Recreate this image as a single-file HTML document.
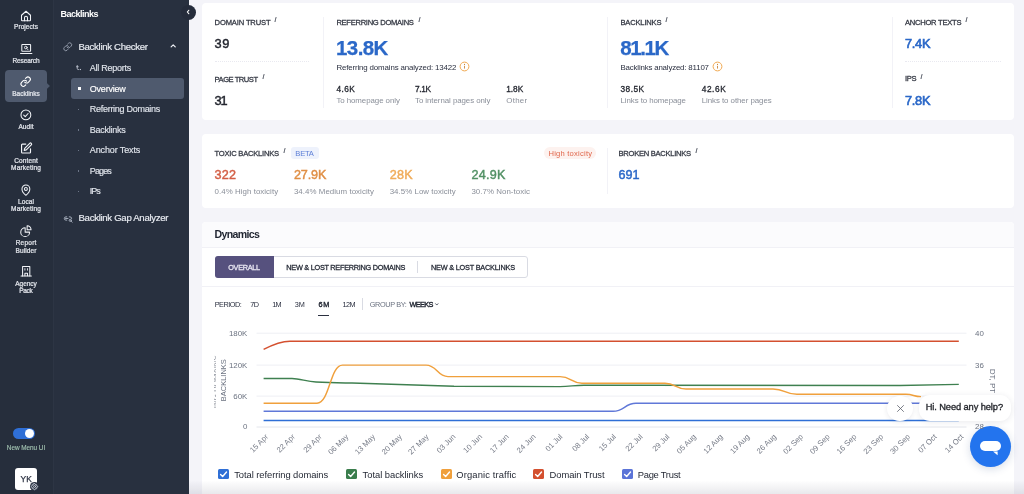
<!DOCTYPE html>
<html lang="en"><head><meta charset="utf-8"><title>Backlinks Overview</title>
<style>
html,body{margin:0;padding:0;}
body{width:1024px;height:494px;overflow:hidden;position:relative;background:#f4f4f9;font-family:"Liberation Sans",sans-serif;}
.t{position:absolute;white-space:pre;line-height:1;}
#txt{position:absolute;left:0;top:0;width:1024px;height:494px;will-change:transform;}
.abs{position:absolute;}
.card{position:absolute;background:#fff;border-radius:4px;}
svg{position:absolute;overflow:visible;}

</style></head>
<body>
<div class="abs" style="left:0;top:0;width:53px;height:494px;background:#262e3c;"></div>
<div class="abs" style="left:53px;top:0;width:135.5px;height:494px;background:#28303f;"></div>
<div class="abs" style="left:52.5px;top:0;width:1px;height:494px;background:#2d3544;"></div>
<!-- active rail -->
<div class="abs" style="left:5px;top:69.9px;width:42.3px;height:32.3px;background:#4f5a6e;border-radius:4px;"></div>
<div class="abs" style="left:45.3px;top:83.6px;width:4.2px;height:4.2px;background:#4f5a6e;transform:rotate(45deg);"></div>
<!-- active sub -->
<div class="abs" style="left:70.7px;top:78px;width:113px;height:20.7px;background:#4f5a6e;border-radius:3px;"></div>
<div class="abs" style="left:78px;top:87.3px;width:2.6px;height:2.6px;background:#fff;"></div>
<!-- collapse btn -->
<div class="abs" style="left:181.1px;top:4.7px;width:15px;height:15px;border-radius:50%;background:#252c3b;"></div>

<!-- cards -->
<div class="card" style="left:201.5px;top:3px;width:812.3px;height:117.3px;"></div>
<div class="card" style="left:201.5px;top:134px;width:812.3px;height:74.300px;"></div>
<div class="card" style="left:201.5px;top:221.600px;width:812.3px;height:280px;"></div>
<!-- rail icons: 24-unit viewBox drawn at 12px -->
<svg style="left:20px;top:9.6px" width="12" height="12" viewBox="0 0 24 24" fill="none" stroke="#f2f4f8" stroke-width="2.1" stroke-linejoin="round" stroke-linecap="round"><path d="M3 10.5 12 2.5l9 8V20a1.5 1.5 0 0 1-1.5 1.5h-15A1.5 1.5 0 0 1 3 20z"/><path d="M9 21.5v-6a3 3 0 0 1 6 0v6"/></svg>
<svg style="left:19.8px;top:42.6px" width="12.4" height="12.4" viewBox="0 0 24 24" fill="none" stroke="#f2f4f8" stroke-width="2" stroke-linejoin="round" stroke-linecap="round"><rect x="3.5" y="3" width="17" height="13" rx="1"/><path d="M1 20.5h22"/><circle cx="11.3" cy="8.8" r="2.6" stroke-width="1.7"/><path d="M13.3 10.8 15.5 13" stroke-width="1.7"/></svg>
<svg style="left:20.4px;top:76.2px" width="11.3" height="11.3" viewBox="0 0 24 24" fill="none" stroke="#ffffff" stroke-width="2.3" stroke-linejoin="round" stroke-linecap="round"><path d="M10 13a5 5 0 0 0 7.54.54l3-3a5 5 0 0 0-7.07-7.07l-1.72 1.71"/><path d="M14 11a5 5 0 0 0-7.54-.54l-3 3a5 5 0 0 0 7.07 7.07l1.71-1.71"/></svg>
<svg style="left:20px;top:109.3px" width="11.8" height="11.8" viewBox="0 0 24 24" fill="none" stroke="#f2f4f8" stroke-width="2.1" stroke-linejoin="round" stroke-linecap="round"><circle cx="12" cy="12" r="10"/><path d="M7.5 12.3l3.2 3.2 5.8-6.3"/></svg>
<svg style="left:19.8px;top:142.4px" width="12.6" height="12.6" viewBox="0 0 24 24" fill="none" stroke="#f2f4f8" stroke-width="2.2" stroke-linejoin="round" stroke-linecap="round"><path d="M11 4H4.5A1.5 1.5 0 0 0 3 5.500v14A1.500 1.500 0 0 0 4.500 21h14a1.500 1.500 0 0 0 1.500-1.500V13"/><path d="M18.500 2.500a2.120 2.120 0 0 1 3 3L12 15l-4 1 1-4z"/></svg>
<svg style="left:20.2px;top:183.8px" width="11.8" height="11.8" viewBox="0 0 24 24" fill="none" stroke="#f2f4f8" stroke-width="2.1" stroke-linejoin="round" stroke-linecap="round"><path d="M20 10c0 6.500-8 13-8 13s-8-6.500-8-13a8 8 0 0 1 16 0z"/><circle cx="12" cy="10" r="3"/></svg>
<svg style="left:20px;top:224.600px" width="11.800" height="11.800" viewBox="0 0 24 24" fill="none" stroke="#f2f4f8" stroke-width="2.100" stroke-linejoin="round" stroke-linecap="round"><path d="M10.500 5.500A9 9 0 1 0 19.500 14.500H10.500z"/><path d="M14.500 1.500v8h8a8 8 0 0 0-8-8z"/></svg>
<svg style="left:19.800px;top:265.300px" width="12.400" height="12.400" viewBox="0 0 24 24" fill="none" stroke="#f2f4f8" stroke-width="2" stroke-linejoin="round" stroke-linecap="round"><path d="M5 21.500V3h14v18.500"/><path d="M2 21.500h20"/><path d="M9.500 21v-5h5v5"/><path d="M9.500 7v3M14.500 7v3" stroke-width="1.700"/></svg>

<!-- toggle -->
<div class="abs" style="left:13px;top:427.700px;width:22.400px;height:11.800px;border-radius:6px;background:#2f6fd6;"></div>
<div class="abs" style="left:24.600px;top:428.700px;width:9.800px;height:9.800px;border-radius:50%;background:#ffffff;"></div>
<!-- avatar -->
<div class="abs" style="left:15.200px;top:467.500px;width:22px;height:22px;border-radius:3px;background:#ffffff;"></div>
<div class="abs" style="left:29.600px;top:482.400px;width:9px;height:9px;border-radius:50%;background:#283040;"></div>
<svg style="left:30.600px;top:483.400px" width="7" height="7" viewBox="0 0 24 24" fill="none" stroke="#cfd5df" stroke-width="3" stroke-linejoin="round" stroke-linecap="round"><circle cx="12" cy="12" r="3.500"/><path d="M12 2l2.500 1 .8 2.600 2.700-.6 1.900 1.900-.6 2.700 2.600.8L23 12l-1 2.500-2.600.8.600 2.700-1.900 1.900-2.700-.6-.8 2.600L12 23l-2.500-1-.8-2.600-2.700.6-1.900-1.900.6-2.700-2.600-.8L1 12l1-2.500 2.600-.8-.6-2.700 1.900-1.900 2.700.6.8-2.600z"/></svg>

<!-- panel icons -->
<svg style="left:63px;top:42px" width="9.500" height="9.500" viewBox="0 0 24 24" fill="none" stroke="#9ba3b2" stroke-width="2.300" stroke-linejoin="round" stroke-linecap="round"><path d="M10 13a5 5 0 0 0 7.540.54l3-3a5 5 0 0 0-7.070-7.070l-1.720 1.710"/><path d="M14 11a5 5 0 0 0-7.540-.54l-3 3a5 5 0 0 0 7.070 7.070l1.710-1.710"/></svg>
<svg style="left:170.400px;top:43px" width="6.400" height="5.500" viewBox="0 0 14 12" fill="none" stroke="#eef0f5" stroke-width="2.700" stroke-linejoin="round" stroke-linecap="round"><path d="M2.500 8.500 7 4l4.500 4.500"/></svg>
<svg style="left:76px;top:65px" width="5" height="5.500" viewBox="0 0 10 11" fill="none" stroke="#c3c9d4" stroke-width="1.700" stroke-linejoin="round" stroke-linecap="round"><path d="M2.500 1v6a2 2 0 0 0 2 2h1M1 3.500h3.500"/><circle cx="8.500" cy="9" r=".5" fill="#c3c9d4"/></svg>
<svg style="left:62.500px;top:214px" width="10" height="9" viewBox="0 0 24 22" fill="none" stroke="#aab2c0" stroke-width="2.300" stroke-linejoin="round" stroke-linecap="round"><path d="M9 7H7a4 4 0 0 0 0 8h2M15 7h2a4 4 0 0 1 4 4M6 11h6"/><circle cx="17.500" cy="15.500" r="2.600"/><path d="M19.500 17.500 22 20"/></svg>
<svg style="left:186.200px;top:9.100px" width="4.300" height="6" viewBox="0 0 10 14" fill="none" stroke="#ffffff" stroke-width="2.600" stroke-linejoin="round" stroke-linecap="round"><path d="M6.500 3 3 7l3.500 4"/></svg>
<div class="abs" style="left:78px;top:108.8px;width:1.400px;height:1.400px;background:#6d7688;"></div>
<div class="abs" style="left:78px;top:129.3px;width:1.400px;height:1.400px;background:#6d7688;"></div>
<div class="abs" style="left:78px;top:149.8px;width:1.400px;height:1.400px;background:#6d7688;"></div>
<div class="abs" style="left:78px;top:170.3px;width:1.400px;height:1.400px;background:#6d7688;"></div>
<div class="abs" style="left:78px;top:190.8px;width:1.400px;height:1.400px;background:#6d7688;"></div>
<svg style="left:0;top:0;will-change:transform" width="1024" height="494" viewBox="0 0 1024 494" fill="none">
<path d="M256.5 333.2H966.5" stroke="#eeeff4" stroke-width="1"/>
<path d="M256.5 365.1H966.5" stroke="#eeeff4" stroke-width="1"/>
<path d="M256.5 396.1H966.5" stroke="#eeeff4" stroke-width="1"/>
<path d="M256.5 427H966.5" stroke="#e4e6ec" stroke-width="1"/>
<path d="M263.6 349.4 C272 345 280 341.2 290 341.2 L958.8 341.2" stroke="#d4502f" stroke-width="1.45"/>
<path d="M263.6 378.5 L292 378.5 C300 378.5 306 381.4 316 382 C330 382.8 340 382.8 352 383 L454 386.2 L560 386.6 C570 386.6 574 385.2 584 385.2 L900 385.4 L958.8 384.4" stroke="#3f8050" stroke-width="1.45"/>
<path d="M263.6 403.2 L317.0 403.2 C329.8 403.2 329.8 365.1 342.5 365.1 L426.0 365.1 C437.0 365.1 437.0 376.6 448.0 376.6 L560.0 376.6 C571.0 376.6 571.0 383.2 582.0 383.2 L665.0 383.2 C675.5 383.2 675.5 389.0 686.0 389.0 L773.0 389.0 C785.0 389.0 785.0 394.3 797.0 394.3 L906.0 394.3 C913.5 394.3 913.5 396.6 921.0 396.6" stroke="#f0a03c" stroke-width="1.45"/>
<path d="M263.6 411.3 L613.0 411.3 C624.5 411.3 624.5 403.3 636.0 403.3 L958.8 403.3" stroke="#6078d8" stroke-width="1.45"/>
<path d="M263.6 420.4 L958.8 420.4" stroke="#2f6fd6" stroke-width="1.45"/>
<text x="268.8" y="437.2" transform="rotate(-45 268.8 437.2)" text-anchor="end" font-size="7.7" fill="#757a86" font-family="Liberation Sans, sans-serif">15 Apr</text>
<text x="295.5" y="437.2" transform="rotate(-45 295.5 437.2)" text-anchor="end" font-size="7.7" fill="#757a86" font-family="Liberation Sans, sans-serif">22 Apr</text>
<text x="322.3" y="437.2" transform="rotate(-45 322.3 437.2)" text-anchor="end" font-size="7.7" fill="#757a86" font-family="Liberation Sans, sans-serif">29 Apr</text>
<text x="349.0" y="437.2" transform="rotate(-45 349.0 437.2)" text-anchor="end" font-size="7.7" fill="#757a86" font-family="Liberation Sans, sans-serif">06 May</text>
<text x="375.8" y="437.2" transform="rotate(-45 375.8 437.2)" text-anchor="end" font-size="7.7" fill="#757a86" font-family="Liberation Sans, sans-serif">13 May</text>
<text x="402.5" y="437.2" transform="rotate(-45 402.5 437.2)" text-anchor="end" font-size="7.7" fill="#757a86" font-family="Liberation Sans, sans-serif">20 May</text>
<text x="429.2" y="437.2" transform="rotate(-45 429.2 437.2)" text-anchor="end" font-size="7.7" fill="#757a86" font-family="Liberation Sans, sans-serif">27 May</text>
<text x="456.0" y="437.2" transform="rotate(-45 456.0 437.2)" text-anchor="end" font-size="7.7" fill="#757a86" font-family="Liberation Sans, sans-serif">03 Jun</text>
<text x="482.7" y="437.2" transform="rotate(-45 482.7 437.2)" text-anchor="end" font-size="7.7" fill="#757a86" font-family="Liberation Sans, sans-serif">10 Jun</text>
<text x="509.4" y="437.2" transform="rotate(-45 509.4 437.2)" text-anchor="end" font-size="7.7" fill="#757a86" font-family="Liberation Sans, sans-serif">17 Jun</text>
<text x="536.2" y="437.2" transform="rotate(-45 536.2 437.2)" text-anchor="end" font-size="7.7" fill="#757a86" font-family="Liberation Sans, sans-serif">24 Jun</text>
<text x="562.9" y="437.2" transform="rotate(-45 562.9 437.2)" text-anchor="end" font-size="7.7" fill="#757a86" font-family="Liberation Sans, sans-serif">01 Jul</text>
<text x="589.7" y="437.2" transform="rotate(-45 589.7 437.2)" text-anchor="end" font-size="7.7" fill="#757a86" font-family="Liberation Sans, sans-serif">08 Jul</text>
<text x="616.4" y="437.2" transform="rotate(-45 616.4 437.2)" text-anchor="end" font-size="7.7" fill="#757a86" font-family="Liberation Sans, sans-serif">15 Jul</text>
<text x="643.1" y="437.2" transform="rotate(-45 643.1 437.2)" text-anchor="end" font-size="7.7" fill="#757a86" font-family="Liberation Sans, sans-serif">22 Jul</text>
<text x="669.9" y="437.2" transform="rotate(-45 669.9 437.2)" text-anchor="end" font-size="7.7" fill="#757a86" font-family="Liberation Sans, sans-serif">29 Jul</text>
<text x="696.6" y="437.2" transform="rotate(-45 696.6 437.2)" text-anchor="end" font-size="7.7" fill="#757a86" font-family="Liberation Sans, sans-serif">05 Aug</text>
<text x="723.4" y="437.2" transform="rotate(-45 723.4 437.2)" text-anchor="end" font-size="7.7" fill="#757a86" font-family="Liberation Sans, sans-serif">12 Aug</text>
<text x="750.1" y="437.2" transform="rotate(-45 750.1 437.2)" text-anchor="end" font-size="7.7" fill="#757a86" font-family="Liberation Sans, sans-serif">19 Aug</text>
<text x="776.8" y="437.2" transform="rotate(-45 776.8 437.2)" text-anchor="end" font-size="7.7" fill="#757a86" font-family="Liberation Sans, sans-serif">26 Aug</text>
<text x="803.6" y="437.2" transform="rotate(-45 803.6 437.2)" text-anchor="end" font-size="7.7" fill="#757a86" font-family="Liberation Sans, sans-serif">02 Sep</text>
<text x="830.3" y="437.2" transform="rotate(-45 830.3 437.2)" text-anchor="end" font-size="7.7" fill="#757a86" font-family="Liberation Sans, sans-serif">09 Sep</text>
<text x="857.0" y="437.2" transform="rotate(-45 857.0 437.2)" text-anchor="end" font-size="7.7" fill="#757a86" font-family="Liberation Sans, sans-serif">16 Sep</text>
<text x="883.8" y="437.2" transform="rotate(-45 883.8 437.2)" text-anchor="end" font-size="7.7" fill="#757a86" font-family="Liberation Sans, sans-serif">23 Sep</text>
<text x="910.5" y="437.2" transform="rotate(-45 910.5 437.2)" text-anchor="end" font-size="7.7" fill="#757a86" font-family="Liberation Sans, sans-serif">30 Sep</text>
<text x="937.3" y="437.2" transform="rotate(-45 937.3 437.2)" text-anchor="end" font-size="7.7" fill="#757a86" font-family="Liberation Sans, sans-serif">07 Oct</text>
<text x="964.0" y="437.2" transform="rotate(-45 964.0 437.2)" text-anchor="end" font-size="7.7" fill="#757a86" font-family="Liberation Sans, sans-serif">14 Oct</text>
<text x="0" y="0" transform="translate(226 380.2) rotate(-90)" text-anchor="middle" font-size="7.9" fill="#6b7280" font-family="Liberation Sans, sans-serif" textLength="42" lengthAdjust="spacingAndGlyphs">BACKLINKS</text>
<text x="0" y="0" transform="translate(989.6 381) rotate(90)" text-anchor="middle" font-size="7.9" fill="#6b7280" font-family="Liberation Sans, sans-serif" textLength="24.500" lengthAdjust="spacingAndGlyphs">DT, PT</text>
</svg>
<div class="abs" style="left:213.600px;top:352px;width:2.800px;height:56px;overflow:hidden;"><svg style="left:0;top:0" width="10" height="90" viewBox="0 0 10 90"><text transform="translate(3.600 1) rotate(-90)" text-anchor="end" font-size="7.900" fill="#8a8f99" font-family="Liberation Sans, sans-serif">REFERRING DOMAINS,</text></svg></div><div class="abs" style="left:214.600px;top:61px;width:94.700px;height:0;border-top:1px dotted #e9e9f0;"></div>
<div class="abs" style="left:905px;top:61px;width:95.800px;height:0;border-top:1px dotted #e9e9f0;"></div>
<div class="abs" style="left:323px;top:16.500px;width:1px;height:91.500px;background:#f2f2f7;"></div>
<div class="abs" style="left:607.3px;top:16.500px;width:1px;height:91.500px;background:#f2f2f7;"></div>
<div class="abs" style="left:891.7px;top:16.500px;width:1px;height:91.500px;background:#f2f2f7;"></div>
<div class="abs" style="left:607.300px;top:148px;width:1px;height:46px;background:#f2f2f7;"></div>
<svg style="left:459.4px;top:61.3px" width="11" height="11" viewBox="0 0 11 11" fill="none"><circle cx="5.500" cy="5.500" r="4.400" stroke="#f0a850" stroke-width="1"/><path d="M5.500 4.800v2.800" stroke="#c9853a" stroke-width=".9"/><circle cx="5.500" cy="3.400" r=".55" fill="#c9853a"/></svg>
<svg style="left:712.3px;top:61.3px" width="11" height="11" viewBox="0 0 11 11" fill="none"><circle cx="5.500" cy="5.500" r="4.400" stroke="#f0a850" stroke-width="1"/><path d="M5.500 4.800v2.800" stroke="#c9853a" stroke-width=".9"/><circle cx="5.500" cy="3.400" r=".55" fill="#c9853a"/></svg>
<div class="abs" style="left:290.800px;top:147.400px;width:28.200px;height:12px;border-radius:3px;background:#eef2fc;"></div>
<div class="abs" style="left:544.300px;top:147.400px;width:51.800px;height:12px;border-radius:6px;background:#fdf2ef;"></div>
<div class="abs" style="left:201.500px;top:221.600px;width:812.300px;height:25.700px;background:#fbfbfd;border-radius:4px 4px 0 0;"></div>
<div class="abs" style="left:201.500px;top:247px;width:812.300px;height:1px;background:#f1f1f6;"></div>
<div class="abs" style="left:201.500px;top:286px;width:812.300px;height:1px;background:#f1f1f6;"></div>
<div class="abs" style="left:214.500px;top:256px;width:313.500px;height:21.500px;border:1px solid #d9dbe3;border-radius:3px;box-sizing:border-box;background:#fff;"></div>
<div class="abs" style="left:214.500px;top:256px;width:59px;height:21.500px;border-radius:3px 0 0 3px;background:#56517e;"></div>
<div class="abs" style="left:417.300px;top:260.500px;width:1px;height:12.500px;background:#d9dbe3;"></div>
<div class="abs" style="left:318.300px;top:315.400px;width:11.200px;height:1.100px;background:#2b3040;"></div>
<div class="abs" style="left:362.400px;top:298.400px;width:1px;height:12px;background:#d9dbe3;"></div>
<svg style="left:435.400px;top:303.200px" width="3.600" height="3" viewBox="0 0 6 5" fill="none" stroke="#2b3040" stroke-width="1.300" stroke-linecap="round" stroke-linejoin="round"><path d="M1 1.200 3 3.400 5 1.200"/></svg>
<div class="abs" style="left:217.8px;top:468.700px;width:10.900px;height:10.500px;border-radius:1.500px;background:#2f6fd6;"></div>
<svg style="left:217.8px;top:468.700px" width="10.900" height="10.500" viewBox="0 0 11 10.500" fill="none" stroke="#ffffff" stroke-width="1.400" stroke-linecap="round" stroke-linejoin="round"><path d="M2.600 5.400 4.700 7.500 8.600 3"/></svg>
<div class="abs" style="left:346.3px;top:468.700px;width:10.900px;height:10.500px;border-radius:1.500px;background:#3a7d4c;"></div>
<svg style="left:346.3px;top:468.700px" width="10.900" height="10.500" viewBox="0 0 11 10.500" fill="none" stroke="#ffffff" stroke-width="1.400" stroke-linecap="round" stroke-linejoin="round"><path d="M2.600 5.400 4.700 7.500 8.600 3"/></svg>
<div class="abs" style="left:441.2px;top:468.700px;width:10.900px;height:10.500px;border-radius:1.500px;background:#f0a03c;"></div>
<svg style="left:441.2px;top:468.700px" width="10.900" height="10.500" viewBox="0 0 11 10.500" fill="none" stroke="#ffffff" stroke-width="1.400" stroke-linecap="round" stroke-linejoin="round"><path d="M2.600 5.400 4.700 7.500 8.600 3"/></svg>
<div class="abs" style="left:533.2px;top:468.700px;width:10.900px;height:10.500px;border-radius:1.500px;background:#d4502f;"></div>
<svg style="left:533.2px;top:468.700px" width="10.900" height="10.500" viewBox="0 0 11 10.500" fill="none" stroke="#ffffff" stroke-width="1.400" stroke-linecap="round" stroke-linejoin="round"><path d="M2.600 5.400 4.700 7.500 8.600 3"/></svg>
<div class="abs" style="left:621.8px;top:468.700px;width:10.900px;height:10.500px;border-radius:1.500px;background:#5b74d8;"></div>
<svg style="left:621.8px;top:468.700px" width="10.900" height="10.500" viewBox="0 0 11 10.500" fill="none" stroke="#ffffff" stroke-width="1.400" stroke-linecap="round" stroke-linejoin="round"><path d="M2.600 5.400 4.700 7.500 8.600 3"/></svg>
<div class="abs" style="left:188.500px;top:480px;width:835.500px;height:14px;background:linear-gradient(to bottom,rgba(120,120,140,0),rgba(120,120,140,.16));"></div>
<div class="abs" style="left:918.500px;top:394.500px;width:92px;height:26.500px;border-radius:11px;background:#fff;box-shadow:0 1px 6px rgba(40,40,70,.10);"></div>
<div class="abs" style="left:887.400px;top:395.900px;width:25.400px;height:25.400px;border-radius:50%;background:#fff;box-shadow:0 1px 5px rgba(40,40,70,.10);"></div>
<svg style="left:896.800px;top:405.300px" width="7" height="7" viewBox="0 0 7 7" fill="none" stroke="#5a5f6b" stroke-width=".8" stroke-linecap="round"><path d="M.500 .500 6.500 6.500M6.500 .500 .500 6.500"/></svg>
<div class="abs" style="left:969.800px;top:426.300px;width:41.200px;height:41.200px;border-radius:50%;background:#2374ee;box-shadow:0 2px 8px rgba(30,60,120,.18);"></div>
<svg style="left:979.800px;top:441px" width="21" height="15" viewBox="0 0 21 15"><rect x="0" y="0" width="21" height="10" rx="5" fill="#fff"/><path d="M13 10.600h4.600v3.600z" fill="#fff"/></svg>
<div id="txt">
<div class="t" style="left:14.05px;top:24.12px;font-size:6.5px;color:#e3e6ec;letter-spacing:0.059px;-webkit-text-stroke:0.23px #e3e6ec;">Projects</div>
<div class="t" style="left:12.45px;top:58.02px;font-size:6.5px;color:#e3e6ec;letter-spacing:-0.104px;-webkit-text-stroke:0.23px #e3e6ec;">Research</div>
<div class="t" style="left:12.20px;top:91.22px;font-size:6.5px;color:#e3e6ec;letter-spacing:0.016px;-webkit-text-stroke:0.23px #e3e6ec;">Backlinks</div>
<div class="t" style="left:18.40px;top:124.22px;font-size:6.5px;color:#e3e6ec;letter-spacing:0.093px;-webkit-text-stroke:0.23px #e3e6ec;">Audit</div>
<div class="t" style="left:14.15px;top:158.12px;font-size:6.5px;color:#e3e6ec;letter-spacing:0.153px;-webkit-text-stroke:0.23px #e3e6ec;">Content</div>
<div class="t" style="left:11.10px;top:165.32px;font-size:6.5px;color:#e3e6ec;letter-spacing:0.157px;-webkit-text-stroke:0.23px #e3e6ec;">Marketing</div>
<div class="t" style="left:18.10px;top:199.12px;font-size:6.5px;color:#e3e6ec;letter-spacing:0.063px;-webkit-text-stroke:0.23px #e3e6ec;">Local</div>
<div class="t" style="left:11.10px;top:206.12px;font-size:6.5px;color:#e3e6ec;letter-spacing:0.157px;-webkit-text-stroke:0.23px #e3e6ec;">Marketing</div>
<div class="t" style="left:15.65px;top:240.32px;font-size:6.5px;color:#e3e6ec;letter-spacing:0.237px;-webkit-text-stroke:0.23px #e3e6ec;">Report</div>
<div class="t" style="left:15.50px;top:247.52px;font-size:6.5px;color:#e3e6ec;letter-spacing:0.128px;-webkit-text-stroke:0.23px #e3e6ec;">Builder</div>
<div class="t" style="left:15.25px;top:281.02px;font-size:6.5px;color:#e3e6ec;letter-spacing:-0.037px;-webkit-text-stroke:0.23px #e3e6ec;">Agency</div>
<div class="t" style="left:19.20px;top:288.32px;font-size:6.5px;color:#e3e6ec;letter-spacing:-0.284px;-webkit-text-stroke:0.23px #e3e6ec;">Pack</div>
<div class="t" style="left:6.80px;top:445.17px;font-size:6.4px;color:#a3c4b2;letter-spacing:-0.032px;-webkit-text-stroke:0.12px #a3c4b2;">New Menu UI</div>
<div class="t" style="left:20.61px;top:474.90px;font-size:8.4px;color:#2a3040;-webkit-text-stroke:0.25px #2a3040;">YK</div>
<div class="t" style="left:60.50px;top:9.70px;font-size:9px;color:#ffffff;font-weight:bold;letter-spacing:-0.504px;">Backlinks</div>
<div class="t" style="left:78.50px;top:41.51px;font-size:9.6px;color:#e9ecf2;letter-spacing:-0.308px;-webkit-text-stroke:0.17px #e9ecf2;">Backlink Checker</div>
<div class="t" style="left:89.80px;top:63.70px;font-size:9.0px;color:#dfe3ea;letter-spacing:-0.252px;-webkit-text-stroke:0.16px #dfe3ea;">All Reports</div>
<div class="t" style="left:89.80px;top:84.70px;font-size:9.0px;color:#ffffff;letter-spacing:-0.217px;-webkit-text-stroke:0.16px #ffffff;">Overview</div>
<div class="t" style="left:89.80px;top:105.20px;font-size:9.0px;color:#dfe3ea;letter-spacing:-0.283px;-webkit-text-stroke:0.16px #dfe3ea;">Referring Domains</div>
<div class="t" style="left:89.80px;top:125.70px;font-size:9.0px;color:#dfe3ea;letter-spacing:-0.252px;-webkit-text-stroke:0.16px #dfe3ea;">Backlinks</div>
<div class="t" style="left:89.80px;top:146.20px;font-size:9.0px;color:#dfe3ea;letter-spacing:-0.125px;-webkit-text-stroke:0.16px #dfe3ea;">Anchor Texts</div>
<div class="t" style="left:89.80px;top:166.70px;font-size:9.0px;color:#dfe3ea;letter-spacing:-0.883px;-webkit-text-stroke:0.16px #dfe3ea;">Pages</div>
<div class="t" style="left:89.80px;top:187.20px;font-size:9.0px;color:#dfe3ea;letter-spacing:-1.008px;-webkit-text-stroke:0.16px #dfe3ea;">IPs</div>
<div class="t" style="left:78.50px;top:213.31px;font-size:9.6px;color:#e9ecf2;letter-spacing:-0.299px;-webkit-text-stroke:0.17px #e9ecf2;">Backlink Gap Analyzer</div>
<div class="t" style="left:214.60px;top:18.99px;font-size:7.6px;color:#333742;letter-spacing:-0.152px;-webkit-text-stroke:0.27px #333742;">DOMAIN TRUST</div>
<div class="t" style="left:274.50px;top:16.19px;font-size:8.0px;color:#555a66;font-style:italic;-webkit-text-stroke:0.22px #555a66;">i</div>
<div class="t" style="left:214.60px;top:37.75px;font-size:12.8px;color:#23262f;letter-spacing:0.566px;-webkit-text-stroke:0.45px #23262f;">39</div>
<div class="t" style="left:214.60px;top:75.99px;font-size:7.6px;color:#333742;letter-spacing:-0.481px;-webkit-text-stroke:0.27px #333742;">PAGE TRUST</div>
<div class="t" style="left:262.50px;top:73.19px;font-size:8.0px;color:#555a66;font-style:italic;-webkit-text-stroke:0.22px #555a66;">i</div>
<div class="t" style="left:214.60px;top:94.85px;font-size:12.8px;color:#23262f;letter-spacing:-1.234px;-webkit-text-stroke:0.45px #23262f;">31</div>
<div class="t" style="left:336.40px;top:18.99px;font-size:7.6px;color:#333742;letter-spacing:-0.299px;-webkit-text-stroke:0.27px #333742;">REFERRING DOMAINS</div>
<div class="t" style="left:418.50px;top:16.19px;font-size:8.0px;color:#555a66;font-style:italic;-webkit-text-stroke:0.22px #555a66;">i</div>
<div class="t" style="left:336.00px;top:37.59px;font-size:20.5px;color:#2b68c8;font-weight:bold;letter-spacing:-0.580px;-webkit-text-stroke:0.25px #2b68c8;">13.8K</div>
<div class="t" style="left:336.40px;top:64.14px;font-size:7.9px;color:#2b3040;letter-spacing:-0.143px;">Referring domains analyzed: 13422</div>
<div class="t" style="left:336.40px;top:85.25px;font-size:8.3px;color:#23262f;letter-spacing:0.474px;-webkit-text-stroke:0.29px #23262f;">4.6K</div>
<div class="t" style="left:336.40px;top:96.94px;font-size:7.9px;color:#8a8f99;letter-spacing:-0.066px;">To homepage only</div>
<div class="t" style="left:415.00px;top:85.25px;font-size:8.3px;color:#23262f;letter-spacing:-0.359px;-webkit-text-stroke:0.29px #23262f;">7.1K</div>
<div class="t" style="left:415.00px;top:96.94px;font-size:7.9px;color:#8a8f99;letter-spacing:-0.060px;">To internal pages only</div>
<div class="t" style="left:506.20px;top:85.25px;font-size:8.3px;color:#23262f;letter-spacing:-0.026px;-webkit-text-stroke:0.29px #23262f;">1.8K</div>
<div class="t" style="left:506.20px;top:96.94px;font-size:7.9px;color:#8a8f99;letter-spacing:0.316px;">Other</div>
<div class="t" style="left:620.50px;top:18.99px;font-size:7.6px;color:#333742;letter-spacing:-0.205px;-webkit-text-stroke:0.27px #333742;">BACKLINKS</div>
<div class="t" style="left:665.50px;top:16.19px;font-size:8.0px;color:#555a66;font-style:italic;-webkit-text-stroke:0.22px #555a66;">i</div>
<div class="t" style="left:620.20px;top:37.59px;font-size:20.5px;color:#2b68c8;font-weight:bold;letter-spacing:-1.380px;-webkit-text-stroke:0.25px #2b68c8;">81.1K</div>
<div class="t" style="left:620.50px;top:64.14px;font-size:7.9px;color:#2b3040;letter-spacing:-0.182px;">Backlinks analyzed: 81107</div>
<div class="t" style="left:620.50px;top:85.25px;font-size:8.3px;color:#23262f;letter-spacing:0.453px;-webkit-text-stroke:0.29px #23262f;">38.5K</div>
<div class="t" style="left:620.50px;top:96.94px;font-size:7.9px;color:#8a8f99;letter-spacing:-0.074px;">Links to homepage</div>
<div class="t" style="left:701.70px;top:85.25px;font-size:8.3px;color:#23262f;letter-spacing:0.578px;-webkit-text-stroke:0.29px #23262f;">42.6K</div>
<div class="t" style="left:701.70px;top:96.94px;font-size:7.9px;color:#8a8f99;letter-spacing:-0.056px;">Links to other pages</div>
<div class="t" style="left:905.00px;top:18.99px;font-size:7.6px;color:#333742;letter-spacing:-0.260px;-webkit-text-stroke:0.27px #333742;">ANCHOR TEXTS</div>
<div class="t" style="left:965.50px;top:16.19px;font-size:8.0px;color:#555a66;font-style:italic;-webkit-text-stroke:0.22px #555a66;">i</div>
<div class="t" style="left:905.00px;top:37.75px;font-size:12.8px;color:#2b68c8;letter-spacing:-0.276px;-webkit-text-stroke:0.64px #2b68c8;">7.4K</div>
<div class="t" style="left:905.00px;top:75.49px;font-size:7.6px;color:#333742;letter-spacing:-0.375px;-webkit-text-stroke:0.27px #333742;">IPS</div>
<div class="t" style="left:920.50px;top:73.19px;font-size:8.0px;color:#555a66;font-style:italic;-webkit-text-stroke:0.22px #555a66;">i</div>
<div class="t" style="left:905.00px;top:94.85px;font-size:12.8px;color:#2b68c8;letter-spacing:-0.276px;-webkit-text-stroke:0.64px #2b68c8;">7.8K</div>
<div class="t" style="left:214.60px;top:149.69px;font-size:7.6px;color:#333742;letter-spacing:-0.237px;-webkit-text-stroke:0.27px #333742;">TOXIC BACKLINKS</div>
<div class="t" style="left:283.50px;top:146.89px;font-size:8.0px;color:#555a66;font-style:italic;-webkit-text-stroke:0.22px #555a66;">i</div>
<div class="t" style="left:295.30px;top:149.69px;font-size:7.6px;color:#5d7fd6;letter-spacing:-0.227px;">BETA</div>
<div class="t" style="left:548.50px;top:149.69px;font-size:7.6px;color:#e0674c;letter-spacing:0.214px;">High toxicity</div>
<div class="t" style="left:214.60px;top:168.54px;font-size:12.6px;color:#d35e45;letter-spacing:0.192px;-webkit-text-stroke:0.44px #d35e45;">322</div>
<div class="t" style="left:214.60px;top:187.74px;font-size:7.9px;color:#8a8f99;letter-spacing:0.046px;">0.4% High toxicity</div>
<div class="t" style="left:293.90px;top:168.54px;font-size:12.6px;color:#e08f45;letter-spacing:-0.105px;-webkit-text-stroke:0.44px #e08f45;">27.9K</div>
<div class="t" style="left:293.90px;top:187.74px;font-size:7.9px;color:#8a8f99;letter-spacing:0.053px;">34.4% Medium toxicity</div>
<div class="t" style="left:389.70px;top:168.54px;font-size:12.6px;color:#f0ac5a;letter-spacing:0.289px;-webkit-text-stroke:0.44px #f0ac5a;">28K</div>
<div class="t" style="left:389.70px;top:187.74px;font-size:7.9px;color:#8a8f99;letter-spacing:0.038px;">34.5% Low toxicity</div>
<div class="t" style="left:471.40px;top:168.54px;font-size:12.6px;color:#529165;letter-spacing:0.270px;-webkit-text-stroke:0.44px #529165;">24.9K</div>
<div class="t" style="left:471.40px;top:187.74px;font-size:7.9px;color:#8a8f99;letter-spacing:0.042px;">30.7% Non-toxic</div>
<div class="t" style="left:618.60px;top:149.69px;font-size:7.6px;color:#333742;letter-spacing:-0.287px;-webkit-text-stroke:0.27px #333742;">BROKEN BACKLINKS</div>
<div class="t" style="left:695.50px;top:146.89px;font-size:8.0px;color:#555a66;font-style:italic;-webkit-text-stroke:0.22px #555a66;">i</div>
<div class="t" style="left:618.60px;top:168.54px;font-size:12.6px;color:#2b68c8;letter-spacing:-0.008px;-webkit-text-stroke:0.44px #2b68c8;">691</div>
<div class="t" style="left:214.60px;top:228.62px;font-size:10.6px;color:#1f2430;font-weight:bold;letter-spacing:-0.695px;">Dynamics</div>
<div class="t" style="left:228.20px;top:263.63px;font-size:7.3px;color:#eceaf5;letter-spacing:-0.279px;-webkit-text-stroke:0.26px #eceaf5;">OVERALL</div>
<div class="t" style="left:286.30px;top:263.63px;font-size:7.3px;color:#1f2430;letter-spacing:-0.258px;-webkit-text-stroke:0.26px #1f2430;">NEW &amp; LOST REFERRING DOMAINS</div>
<div class="t" style="left:431.00px;top:263.63px;font-size:7.3px;color:#1f2430;letter-spacing:-0.203px;-webkit-text-stroke:0.26px #1f2430;">NEW &amp; LOST BACKLINKS</div>
<div class="t" style="left:214.70px;top:301.03px;font-size:7.3px;color:#2b3040;letter-spacing:-0.469px;">PERIOD:</div>
<div class="t" style="left:250.30px;top:301.03px;font-size:7.3px;color:#2b3040;letter-spacing:-0.528px;">7D</div>
<div class="t" style="left:272.30px;top:301.03px;font-size:7.3px;color:#2b3040;letter-spacing:-0.741px;">1M</div>
<div class="t" style="left:294.70px;top:301.03px;font-size:7.3px;color:#2b3040;letter-spacing:-0.041px;">3M</div>
<div class="t" style="left:318.50px;top:301.03px;font-size:7.3px;color:#1f2430;letter-spacing:0.759px;-webkit-text-stroke:0.36px #1f2430;">6M</div>
<div class="t" style="left:342.60px;top:301.03px;font-size:7.3px;color:#2b3040;letter-spacing:-0.602px;">12M</div>
<div class="t" style="left:369.80px;top:301.03px;font-size:7.3px;color:#6b7280;letter-spacing:-0.364px;">GROUP BY:</div>
<div class="t" style="left:409.60px;top:301.03px;font-size:7.3px;color:#1f2430;letter-spacing:-0.615px;-webkit-text-stroke:0.36px #1f2430;">WEEKS</div>
<div class="t" style="left:228.96px;top:329.74px;font-size:7.9px;color:#6b7280;">180K</div>
<div class="t" style="left:228.96px;top:361.54px;font-size:7.9px;color:#6b7280;">120K</div>
<div class="t" style="left:233.35px;top:392.54px;font-size:7.9px;color:#6b7280;">60K</div>
<div class="t" style="left:243.01px;top:423.44px;font-size:7.9px;color:#6b7280;">0</div>
<div class="t" style="left:975.00px;top:329.74px;font-size:7.9px;color:#6b7280;">40</div>
<div class="t" style="left:975.00px;top:361.54px;font-size:7.9px;color:#6b7280;">36</div>
<div class="t" style="left:975.00px;top:423.44px;font-size:7.9px;color:#6b7280;">28</div>
<div class="t" style="left:234.20px;top:469.81px;font-size:9.4px;color:#1f2430;letter-spacing:-0.062px;">Total referring domains</div>
<div class="t" style="left:362.60px;top:469.81px;font-size:9.4px;color:#1f2430;letter-spacing:-0.033px;">Total backlinks</div>
<div class="t" style="left:456.30px;top:469.81px;font-size:9.4px;color:#1f2430;letter-spacing:0.129px;">Organic traffic</div>
<div class="t" style="left:549.60px;top:469.81px;font-size:9.4px;color:#1f2430;letter-spacing:-0.068px;">Domain Trust</div>
<div class="t" style="left:637.70px;top:469.81px;font-size:9.4px;color:#1f2430;letter-spacing:-0.260px;">Page Trust</div>
<div class="t" style="left:925.70px;top:403.16px;font-size:9.3px;color:#26282e;letter-spacing:-0.099px;-webkit-text-stroke:0.33px #26282e;">Hi. Need any help?</div>
</div>
</body></html>
